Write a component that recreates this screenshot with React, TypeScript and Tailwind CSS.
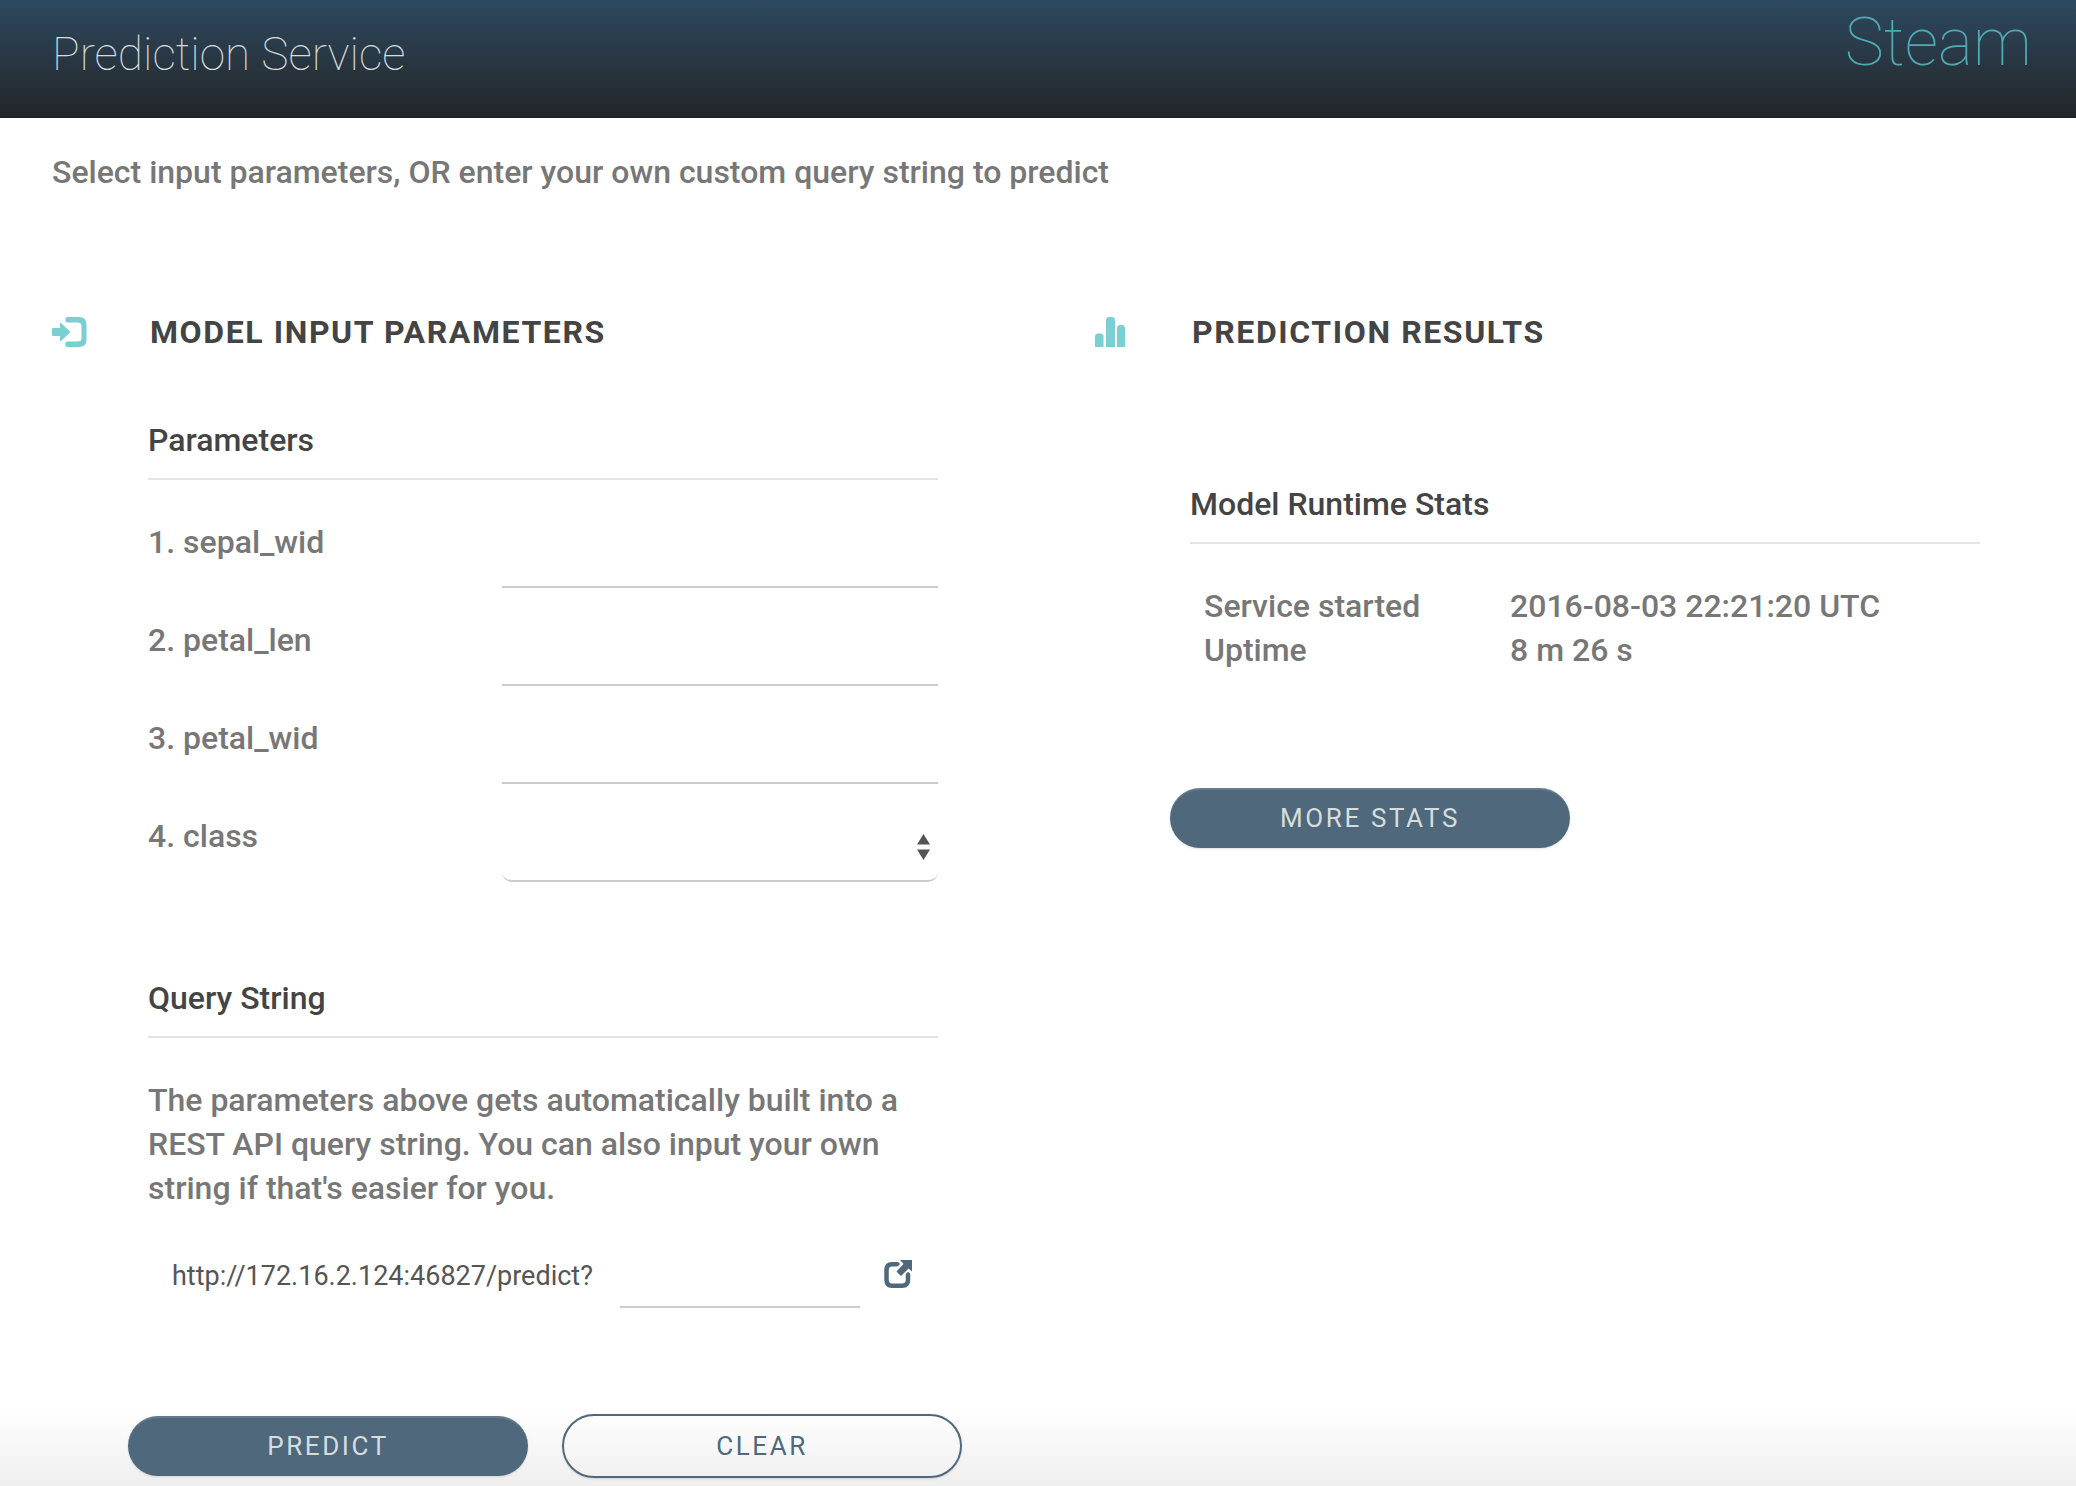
import type { ReactNode } from 'react';

function InputIcon() {
  return (
    <svg className="h-[30px] w-9" viewBox="0 0 36 30" fill="#7acfd2" aria-hidden="true">
      <path d="M1 11h7V6.500q0-1 1-0.500l8.500 8q1 1 0 2L9 24q-1 .5-1-.5V19H1q-1 0-1-1v-6q0-1 1-1z" />
      <path d="M15 0H27q7.500 0 7.500 7.500v15Q34.500 30 27 30H15q-1.500 0-1.500-1.500V26q0-1.500 1.500-1.500H26q3.500 0 3.500-3.500V9q0-3.500-3.500-3.500H15q-1.500 0-1.500-1.500V1.500Q13.500 0 15 0z" />
    </svg>
  );
}

function BarsIcon() {
  return (
    <svg className="h-[30px] w-8" viewBox="0 0 32 30" fill="#7acfd2" aria-hidden="true">
      <path d="M1 30V20q0-3.500 3-3.500h2.500q3 0 3 3.500v10z" />
      <path d="M12 30V3.500Q12 0 15 0h3q3 0 3 3.500V30z" />
      <path d="M23 30V11.500Q23 8 26 8h2q3 0 3 3.500V30z" />
    </svg>
  );
}

function OpenIcon() {
  return (
    <svg className="h-7 w-7" viewBox="0 0 28 28" fill="none" aria-hidden="true">
      <path d="M8 4.250h10q6 0 6 6v9.500q0 6-6 6H8q-5.500 0-5.500-6v-9.500q0-6 5.500-6z" stroke="#4f687c" strokeWidth="4.500" />
      <path d="M15 0h13v12.500l-4-3.500-8 8-5-5 8-8z" fill="#4f687c" stroke="#fff" strokeWidth="4" />
      <path d="M28 0v0H16l3.500 4-7 7.500 4.500 4.500 7.500-7.500L28 11.500z" fill="#4f687c" />
    </svg>
  );
}

function SectionTitle({ icon, children }: { icon: ReactNode; children: ReactNode }) {
  return (
    <div className="flex h-12 items-center">
      <div className="w-[98px] shrink-0">{icon}</div>
      <h2 className="whitespace-nowrap text-[32px] font-bold tracking-wider text-[#444]">{children}</h2>
    </div>
  );
}

function SubTitle({ children }: { children: ReactNode }) {
  return (
    <h3 className="border-b-2 border-[#e3e3e3] pb-4 text-[32px] leading-[44px] font-medium text-[#444]">{children}</h3>
  );
}

const solid =
  'h-[60px] w-[400px] rounded-[32px] border-t-2 border-[#647b8d] bg-[#4f687c] pb-[2px] text-[26px] font-normal tracking-widest text-[#d5dddd] shadow-sm';

const fields = ['sepal_wid', 'petal_len', 'petal_wid'];

export default function App() {
  return (
    <div className="flex min-h-screen flex-col bg-white font-['Roboto',sans-serif] text-[32px] leading-[44px] font-medium text-[#777]">
      <header className="flex h-[118px] items-start justify-between border-b border-[#231f20] bg-linear-to-b from-[#2d4960] to-[#232628] pr-11 pl-[52px]">
        <h1 className="pt-6 text-[46px] leading-[60px] font-thin text-[#d5dddd]">Prediction Service</h1>
        <div className="text-[66px] leading-[86px] font-thin text-[#4fabb3]">Steam</div>
      </header>
      <main className="flex grow flex-col bg-linear-to-t from-[#efefef] to-white to-[76px] pr-24 pl-[52px]">
        <p className="pt-8">Select input parameters, OR enter your own custom query string to predict</p>
        <div className="mt-[114px] grid grid-cols-2 gap-[156px]">
          <section>
            <SectionTitle icon={<InputIcon />}>MODEL INPUT PARAMETERS</SectionTitle>
            <form className="pl-24" onSubmit={(e) => e.preventDefault()}>
              <div className="pt-[62px]">
                <SubTitle>Parameters</SubTitle>
              </div>
              <div className="pt-[10px]">
                {fields.map((name, i) => (
                  <div key={name} className="flex h-[98px] items-end justify-between">
                    <label htmlFor={name} className="pb-6">{`${i + 1}. ${name}`}</label>
                    <input id={name} className="h-16 w-[436px] border-b-2 border-[#ccc] outline-none" />
                  </div>
                ))}
                <div className="flex h-[98px] items-end justify-between">
                  <label htmlFor="class" className="pb-6">4. class</label>
                  <div className="relative">
                    <select id="class" className="block h-16 w-[436px] appearance-none rounded-[10px] border-b-2 border-[#ccc] bg-transparent outline-none">
                      <option value=""></option>
                    </select>
                    <svg className="pointer-events-none absolute right-2 bottom-[22px] h-[26px] w-[13px]" viewBox="0 0 13 26" fill="#555" aria-hidden="true">
                      <path d="M6.500 0L13 10.500H0zM0 15.500h13L6.500 26z" />
                    </svg>
                  </div>
                </div>
              </div>
              <div className="pt-[94px]">
                <SubTitle>Query String</SubTitle>
              </div>
              <p className="pt-10">
                The parameters above gets automatically built into a REST API query string. You can also input your own string if that's easier for you.
              </p>
              <div className="mt-[34px] flex h-16 items-start pl-6 text-[27px] font-normal text-[#555]">
                <label htmlFor="query" className="w-[448px] pt-[10px]">http://172.16.2.124:46827/predict?</label>
                <input id="query" className="h-16 w-60 border-b-2 border-[#ccc] outline-none" />
                <button type="button" aria-label="Open query" className="ml-6 pt-4">
                  <OpenIcon />
                </button>
              </div>
              <div className="mt-[106px] -ml-5 flex w-max items-center gap-[34px] pb-2">
                <button type="submit" className={solid}>PREDICT</button>
                <button type="reset" className="h-16 w-[400px] rounded-[32px] border-2 border-[#4f687c] text-[26px] font-normal tracking-widest text-[#4f687c] shadow-sm">CLEAR</button>
              </div>
            </form>
          </section>
          <section>
            <SectionTitle icon={<BarsIcon />}>PREDICTION RESULTS</SectionTitle>
            <div className="pt-[126px] pl-24">
              <SubTitle>Model Runtime Stats</SubTitle>
              <table className="mt-10 ml-[14px] text-left">
                <tbody>
                  <tr>
                    <th scope="row" className="w-[306px] font-medium">Service started</th>
                    <td>2016-08-03 22:21:20 UTC</td>
                  </tr>
                  <tr>
                    <th scope="row" className="font-medium">Uptime</th>
                    <td>8 m 26 s</td>
                  </tr>
                </tbody>
              </table>
              <button type="button" className={`${solid} mt-[116px] -ml-5`}>MORE STATS</button>
            </div>
          </section>
        </div>
      </main>
    </div>
  );
}
